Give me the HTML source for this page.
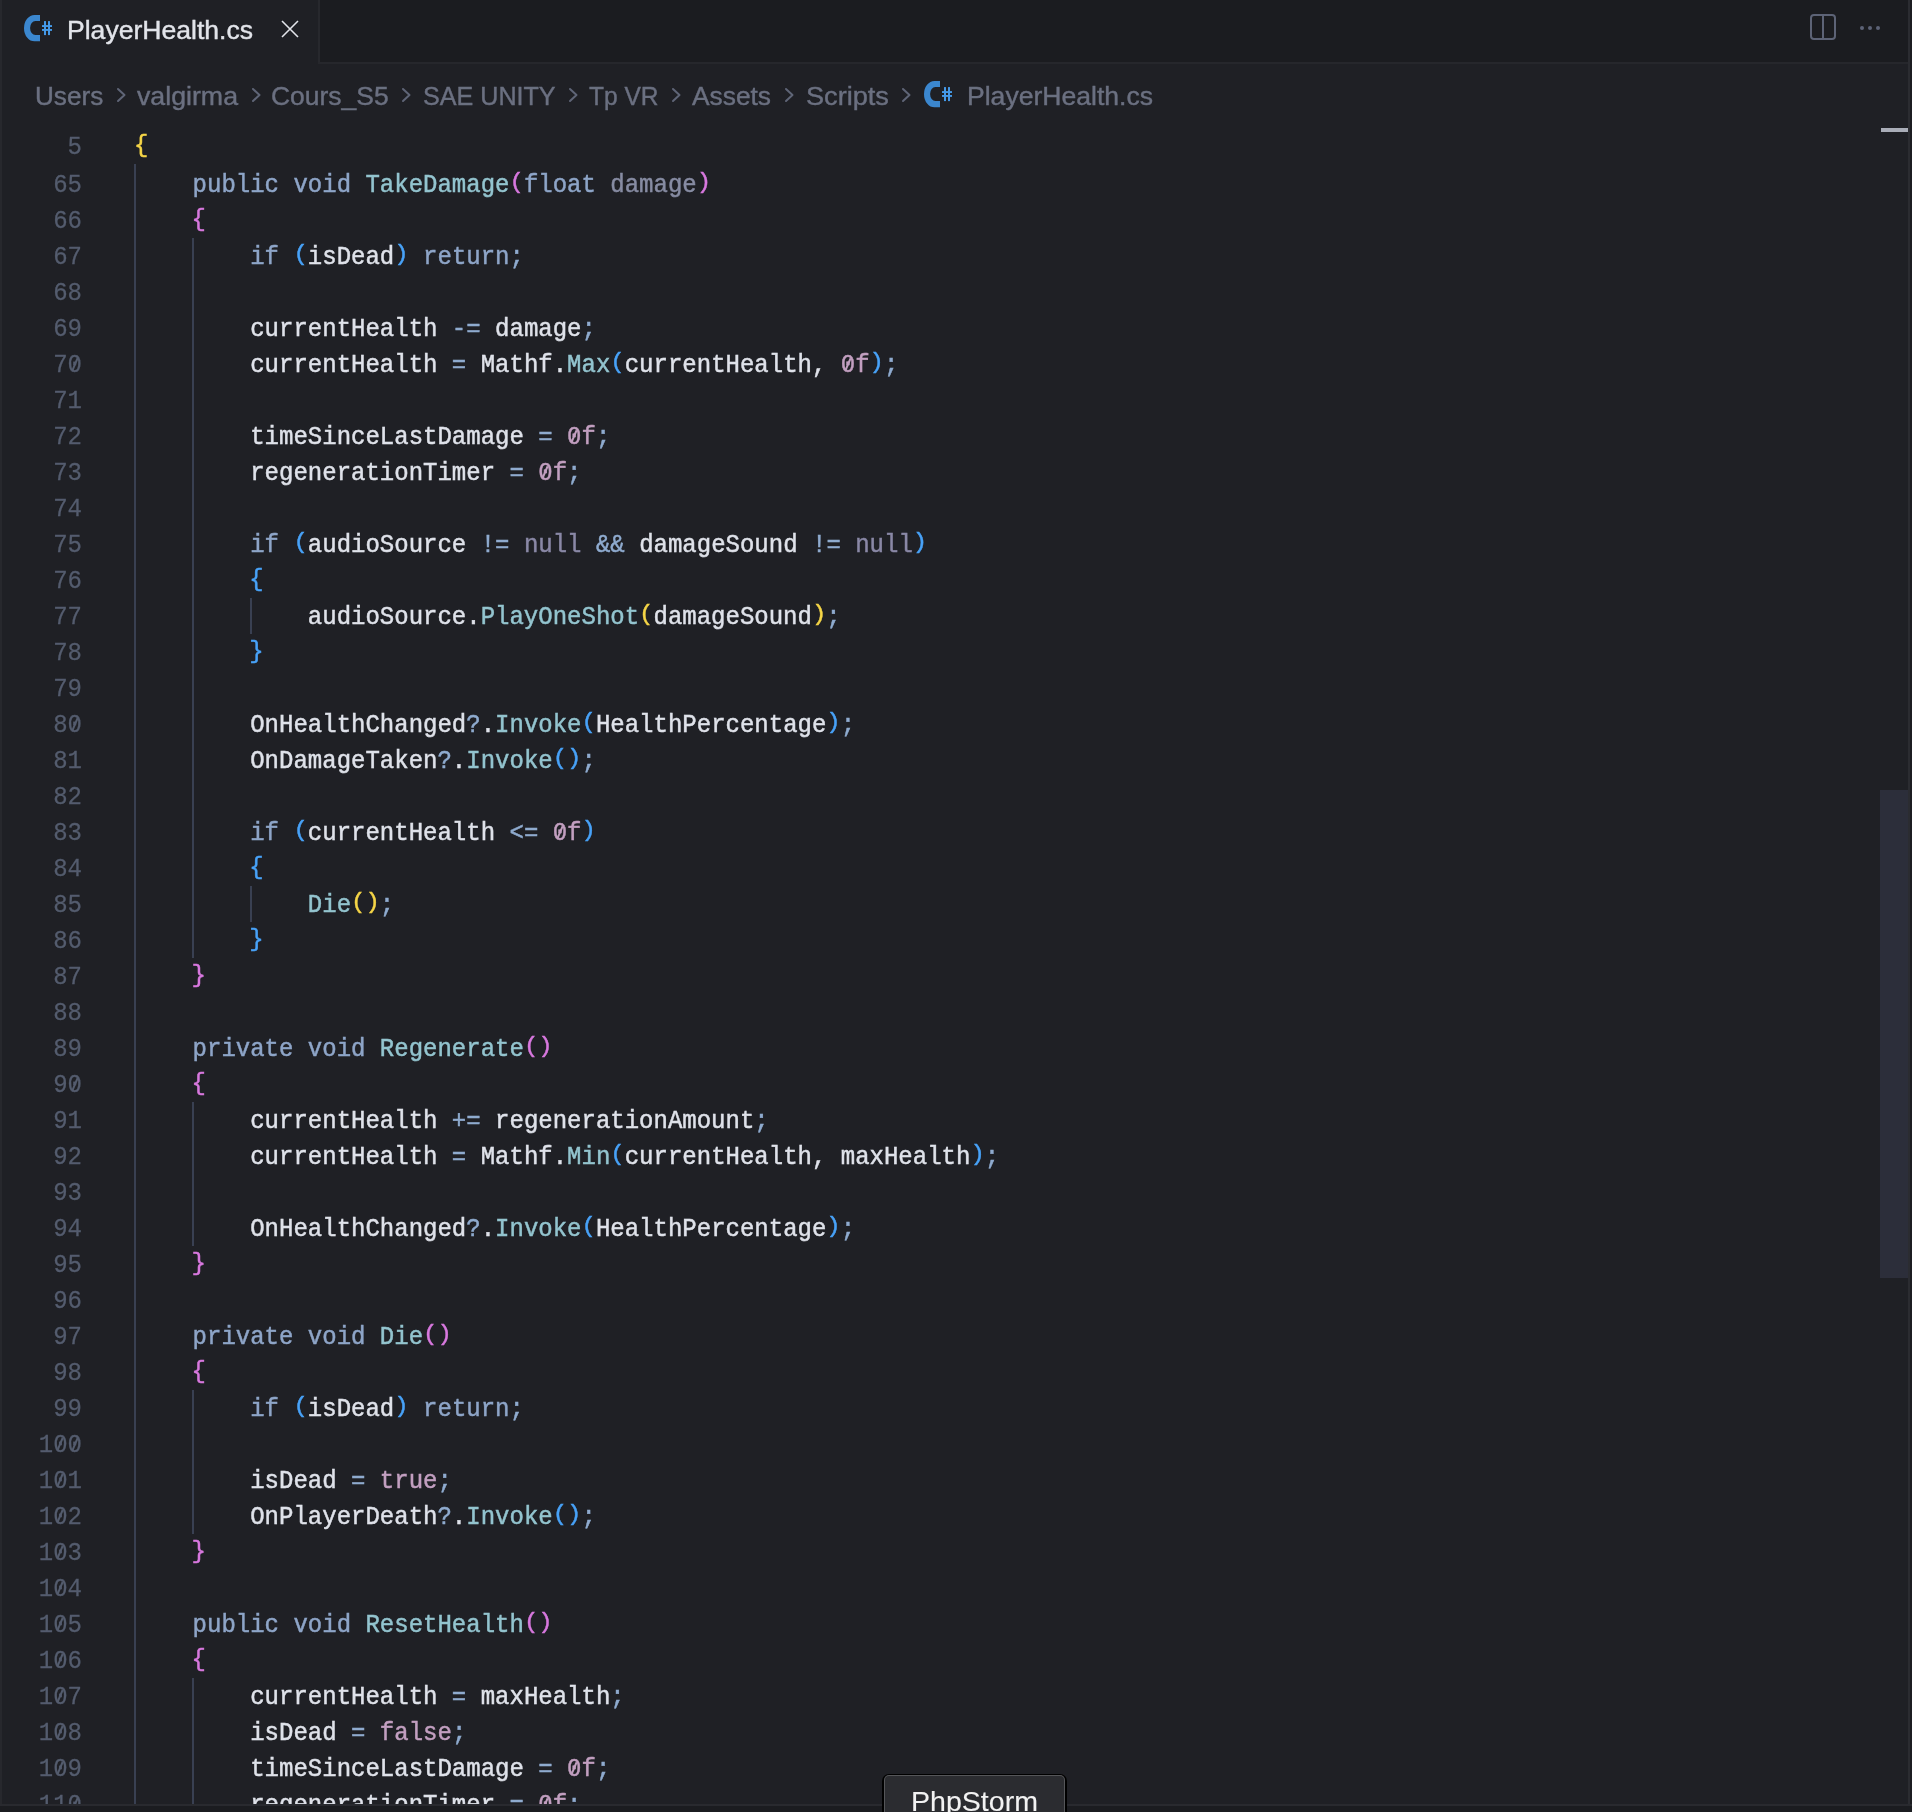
<!DOCTYPE html>
<html><head><meta charset="utf-8"><style>
html,body{margin:0;padding:0;}
body{width:1912px;height:1812px;background:#1f2025;position:relative;overflow:hidden;font-family:"Liberation Sans",sans-serif;-webkit-font-smoothing:antialiased;}
#wrap{position:absolute;left:0;top:0;width:1912px;height:1812px;will-change:transform;}
.abs{position:absolute;}
.ln{position:absolute;left:0;width:82px;text-align:right;font-family:"Liberation Mono",monospace;font-size:24px;line-height:36px;height:36px;color:#545c6e;transform:translateY(1.5px) scaleY(1.07);transform-origin:0 23.5px;white-space:pre;}
.cl{position:absolute;left:135px;font-family:"Liberation Mono",monospace;font-size:24px;line-height:36px;height:36px;color:#dfe2ea;transform:translateY(1.5px) scaleY(1.05);transform-origin:0 23.5px;white-space:pre;}
.cl i,.ln i{font-style:normal;}
.z{position:relative;display:inline-block;}
.z b{position:absolute;left:50%;top:17px;width:1.8px;height:12.5px;background:currentColor;transform:translate(-50%,-50%) rotate(24deg);}
.pb{display:inline-block;transform:translateY(-1.3px) scaleY(0.9);transform-origin:50% 6px;}
.cb{display:inline-block;transform:translate(-1px,-0.4px) scaleY(0.94);transform-origin:50% 6.5px;}
.cl{-webkit-text-stroke:0.45px currentColor;}
.ln{-webkit-text-stroke:0.25px currentColor;}
.k{color:#8ea5c8}.p{color:#878ca3}.f{color:#93c4cf}.i{color:#dfe2ea}.o{color:#8fabcf}.n{color:#c29fc0}.nl{color:#8a88a6}.y{color:#f5d547}.m{color:#d878df}.b{color:#48a2f8}.w{color:#dcdfe6}
.g{position:absolute;width:2px;background:#394052;}
.st{position:absolute;white-space:pre;transform-origin:0 0;line-height:1;-webkit-text-stroke:0.4px currentColor;}
.cs,.chev{position:absolute;}
</style></head><body><div id="wrap">
<div class="abs" style="left:0;top:0;width:2px;height:1804px;background:#27282d"></div>
<div class="abs" style="left:318px;top:0;width:1594px;height:62px;background:#1b1c20"></div>
<div class="abs" style="left:318px;top:0;width:2px;height:63px;background:#27282d"></div>
<div class="abs" style="left:318px;top:62px;width:1594px;height:2px;background:#26272c"></div>
<svg class="cs" style="left:24px;top:15px" width="30" height="28" viewBox="0 0 30 28"><path d="M16,0 H10.5 A10.5,13.15 0 0 0 10.5,26.3 H16 V20.1 H11.4 A5.3,7.05 0 0 1 11.4,6 H16 Z" fill="#3b87cf"/><rect x="20" y="6.1" width="2" height="14" fill="#4499e8"/><rect x="24" y="6.1" width="2" height="14" fill="#4499e8"/><rect x="18" y="10.1" width="10" height="1.9" fill="#4499e8"/><rect x="18" y="14" width="10" height="1.9" fill="#4499e8"/></svg>
<div class="st" style="left:67.3px;top:17px;font-size:26px;color:#e2e4ea;transform:scaleX(1.0217);">PlayerHealth.cs</div>
<svg class="abs" style="left:280px;top:19px" width="20" height="20" viewBox="0 0 20 20"><path d="M2,2 L18,18 M18,2 L2,18" stroke="#e2e4ea" stroke-width="1.6"/></svg>
<svg class="abs" style="left:1809px;top:13px" width="28" height="28" viewBox="0 0 28 28"><rect x="2" y="2" width="24" height="24" rx="3" fill="none" stroke="#5d6376" stroke-width="2"/><rect x="13" y="2" width="2" height="24" fill="#5d6376"/></svg>
<div class="abs" style="left:1860px;top:26px;width:4px;height:4px;border-radius:2px;background:#5d6376"></div>
<div class="abs" style="left:1868px;top:26px;width:4px;height:4px;border-radius:2px;background:#5d6376"></div>
<div class="abs" style="left:1876px;top:26px;width:4px;height:4px;border-radius:2px;background:#5d6376"></div>
<div class="st" style="left:35.1px;top:84px;font-size:25px;color:#6b7081;transform:scaleX(1.0447);">Users</div>
<div class="st" style="left:137.2px;top:84px;font-size:25px;color:#6b7081;transform:scaleX(1.0691);">valgirma</div>
<div class="st" style="left:271px;top:84px;font-size:25px;color:#6b7081;transform:scaleX(1.0578);">Cours_S5</div>
<div class="st" style="left:422.6px;top:84px;font-size:25px;color:#6b7081;transform:scaleX(1.0049);">SAE UNITY</div>
<div class="st" style="left:589.3px;top:84px;font-size:25px;color:#6b7081;transform:scaleX(0.9810);">Tp VR</div>
<div class="st" style="left:692.3px;top:84px;font-size:25px;color:#6b7081;transform:scaleX(1.0529);">Assets</div>
<div class="st" style="left:805.5px;top:84px;font-size:25px;color:#6b7081;transform:scaleX(1.0850);">Scripts</div>
<div class="st" style="left:966.8px;top:84px;font-size:25px;color:#6b7081;transform:scaleX(1.0624);">PlayerHealth.cs</div>
<svg class="chev" style="left:115.6px;top:87px" width="12" height="16" viewBox="0 0 12 16"><path d="M2,2 L8.5,8 L2,14" fill="none" stroke="#5f6577" stroke-width="2" stroke-linecap="round" stroke-linejoin="round"/></svg>
<svg class="chev" style="left:250.8px;top:87px" width="12" height="16" viewBox="0 0 12 16"><path d="M2,2 L8.5,8 L2,14" fill="none" stroke="#5f6577" stroke-width="2" stroke-linecap="round" stroke-linejoin="round"/></svg>
<svg class="chev" style="left:400.8px;top:87px" width="12" height="16" viewBox="0 0 12 16"><path d="M2,2 L8.5,8 L2,14" fill="none" stroke="#5f6577" stroke-width="2" stroke-linecap="round" stroke-linejoin="round"/></svg>
<svg class="chev" style="left:568px;top:87px" width="12" height="16" viewBox="0 0 12 16"><path d="M2,2 L8.5,8 L2,14" fill="none" stroke="#5f6577" stroke-width="2" stroke-linecap="round" stroke-linejoin="round"/></svg>
<svg class="chev" style="left:671.4px;top:87px" width="12" height="16" viewBox="0 0 12 16"><path d="M2,2 L8.5,8 L2,14" fill="none" stroke="#5f6577" stroke-width="2" stroke-linecap="round" stroke-linejoin="round"/></svg>
<svg class="chev" style="left:784px;top:87px" width="12" height="16" viewBox="0 0 12 16"><path d="M2,2 L8.5,8 L2,14" fill="none" stroke="#5f6577" stroke-width="2" stroke-linecap="round" stroke-linejoin="round"/></svg>
<svg class="chev" style="left:900.8px;top:87px" width="12" height="16" viewBox="0 0 12 16"><path d="M2,2 L8.5,8 L2,14" fill="none" stroke="#5f6577" stroke-width="2" stroke-linecap="round" stroke-linejoin="round"/></svg>
<svg class="cs" style="left:924px;top:81px" width="30" height="28" viewBox="0 0 30 28"><path d="M16,0 H10.5 A10.5,13.15 0 0 0 10.5,26.3 H16 V20.1 H11.4 A5.3,7.05 0 0 1 11.4,6 H16 Z" fill="#3b87cf"/><rect x="20" y="6.1" width="2" height="14" fill="#4499e8"/><rect x="24" y="6.1" width="2" height="14" fill="#4499e8"/><rect x="18" y="10.1" width="10" height="1.9" fill="#4499e8"/><rect x="18" y="14" width="10" height="1.9" fill="#4499e8"/></svg>
<div class="ln" style="top:166px">65</div>
<div class="cl" style="top:166px">    <i class="k">public</i> <i class="k">void</i> <i class="f">TakeDamage</i><i class="m pb">(</i><i class="k">float</i> <i class="p">damage</i><i class="m pb">)</i></div>
<div class="ln" style="top:202px">66</div>
<div class="cl" style="top:202px">    <i class="m cb">{</i></div>
<div class="ln" style="top:238px">67</div>
<div class="cl" style="top:238px">        <i class="k">if</i> <i class="b pb">(</i><i class="i">isDead</i><i class="b pb">)</i> <i class="k">return</i><i class="o">;</i></div>
<div class="ln" style="top:274px">68</div>
<div class="ln" style="top:310px">69</div>
<div class="cl" style="top:310px">        <i class="i">currentHealth</i> <i class="o">-=</i> <i class="i">damage</i><i class="o">;</i></div>
<div class="ln" style="top:346px">7<i class="z">0<b></b></i></div>
<div class="cl" style="top:346px">        <i class="i">currentHealth</i> <i class="o">=</i> <i class="i">Mathf.</i><i class="f">Max</i><i class="b pb">(</i><i class="i">currentHealth, </i><i class="n"><i class="z">0<b></b></i>f</i><i class="b pb">)</i><i class="o">;</i></div>
<div class="ln" style="top:382px">71</div>
<div class="ln" style="top:418px">72</div>
<div class="cl" style="top:418px">        <i class="i">timeSinceLastDamage</i> <i class="o">=</i> <i class="n"><i class="z">0<b></b></i>f</i><i class="o">;</i></div>
<div class="ln" style="top:454px">73</div>
<div class="cl" style="top:454px">        <i class="i">regenerationTimer</i> <i class="o">=</i> <i class="n"><i class="z">0<b></b></i>f</i><i class="o">;</i></div>
<div class="ln" style="top:490px">74</div>
<div class="ln" style="top:526px">75</div>
<div class="cl" style="top:526px">        <i class="k">if</i> <i class="b pb">(</i><i class="i">audioSource</i> <i class="o">!=</i> <i class="nl">null</i> <i class="o">&amp;&amp;</i> <i class="i">damageSound</i> <i class="o">!=</i> <i class="nl">null</i><i class="b pb">)</i></div>
<div class="ln" style="top:562px">76</div>
<div class="cl" style="top:562px">        <i class="b cb">{</i></div>
<div class="ln" style="top:598px">77</div>
<div class="cl" style="top:598px">            <i class="i">audioSource.</i><i class="f">PlayOneShot</i><i class="y pb">(</i><i class="i">damageSound</i><i class="y pb">)</i><i class="o">;</i></div>
<div class="ln" style="top:634px">78</div>
<div class="cl" style="top:634px">        <i class="b cb">}</i></div>
<div class="ln" style="top:670px">79</div>
<div class="ln" style="top:706px">8<i class="z">0<b></b></i></div>
<div class="cl" style="top:706px">        <i class="i">OnHealthChanged</i><i class="o">?</i><i class="i">.</i><i class="f">Invoke</i><i class="b pb">(</i><i class="i">HealthPercentage</i><i class="b pb">)</i><i class="o">;</i></div>
<div class="ln" style="top:742px">81</div>
<div class="cl" style="top:742px">        <i class="i">OnDamageTaken</i><i class="o">?</i><i class="i">.</i><i class="f">Invoke</i><i class="b pb">(</i><i class="b pb">)</i><i class="o">;</i></div>
<div class="ln" style="top:778px">82</div>
<div class="ln" style="top:814px">83</div>
<div class="cl" style="top:814px">        <i class="k">if</i> <i class="b pb">(</i><i class="i">currentHealth</i> <i class="o">&lt;=</i> <i class="n"><i class="z">0<b></b></i>f</i><i class="b pb">)</i></div>
<div class="ln" style="top:850px">84</div>
<div class="cl" style="top:850px">        <i class="b cb">{</i></div>
<div class="ln" style="top:886px">85</div>
<div class="cl" style="top:886px">            <i class="f">Die</i><i class="y pb">(</i><i class="y pb">)</i><i class="o">;</i></div>
<div class="ln" style="top:922px">86</div>
<div class="cl" style="top:922px">        <i class="b cb">}</i></div>
<div class="ln" style="top:958px">87</div>
<div class="cl" style="top:958px">    <i class="m cb">}</i></div>
<div class="ln" style="top:994px">88</div>
<div class="ln" style="top:1030px">89</div>
<div class="cl" style="top:1030px">    <i class="k">private</i> <i class="k">void</i> <i class="f">Regenerate</i><i class="m pb">(</i><i class="m pb">)</i></div>
<div class="ln" style="top:1066px">9<i class="z">0<b></b></i></div>
<div class="cl" style="top:1066px">    <i class="m cb">{</i></div>
<div class="ln" style="top:1102px">91</div>
<div class="cl" style="top:1102px">        <i class="i">currentHealth</i> <i class="o">+=</i> <i class="i">regenerationAmount</i><i class="o">;</i></div>
<div class="ln" style="top:1138px">92</div>
<div class="cl" style="top:1138px">        <i class="i">currentHealth</i> <i class="o">=</i> <i class="i">Mathf.</i><i class="f">Min</i><i class="b pb">(</i><i class="i">currentHealth, maxHealth</i><i class="b pb">)</i><i class="o">;</i></div>
<div class="ln" style="top:1174px">93</div>
<div class="ln" style="top:1210px">94</div>
<div class="cl" style="top:1210px">        <i class="i">OnHealthChanged</i><i class="o">?</i><i class="i">.</i><i class="f">Invoke</i><i class="b pb">(</i><i class="i">HealthPercentage</i><i class="b pb">)</i><i class="o">;</i></div>
<div class="ln" style="top:1246px">95</div>
<div class="cl" style="top:1246px">    <i class="m cb">}</i></div>
<div class="ln" style="top:1282px">96</div>
<div class="ln" style="top:1318px">97</div>
<div class="cl" style="top:1318px">    <i class="k">private</i> <i class="k">void</i> <i class="f">Die</i><i class="m pb">(</i><i class="m pb">)</i></div>
<div class="ln" style="top:1354px">98</div>
<div class="cl" style="top:1354px">    <i class="m cb">{</i></div>
<div class="ln" style="top:1390px">99</div>
<div class="cl" style="top:1390px">        <i class="k">if</i> <i class="b pb">(</i><i class="i">isDead</i><i class="b pb">)</i> <i class="k">return</i><i class="o">;</i></div>
<div class="ln" style="top:1426px">1<i class="z">0<b></b></i><i class="z">0<b></b></i></div>
<div class="ln" style="top:1462px">1<i class="z">0<b></b></i>1</div>
<div class="cl" style="top:1462px">        <i class="i">isDead</i> <i class="o">=</i> <i class="n">true</i><i class="o">;</i></div>
<div class="ln" style="top:1498px">1<i class="z">0<b></b></i>2</div>
<div class="cl" style="top:1498px">        <i class="i">OnPlayerDeath</i><i class="o">?</i><i class="i">.</i><i class="f">Invoke</i><i class="b pb">(</i><i class="b pb">)</i><i class="o">;</i></div>
<div class="ln" style="top:1534px">1<i class="z">0<b></b></i>3</div>
<div class="cl" style="top:1534px">    <i class="m cb">}</i></div>
<div class="ln" style="top:1570px">1<i class="z">0<b></b></i>4</div>
<div class="ln" style="top:1606px">1<i class="z">0<b></b></i>5</div>
<div class="cl" style="top:1606px">    <i class="k">public</i> <i class="k">void</i> <i class="f">ResetHealth</i><i class="m pb">(</i><i class="m pb">)</i></div>
<div class="ln" style="top:1642px">1<i class="z">0<b></b></i>6</div>
<div class="cl" style="top:1642px">    <i class="m cb">{</i></div>
<div class="ln" style="top:1678px">1<i class="z">0<b></b></i>7</div>
<div class="cl" style="top:1678px">        <i class="i">currentHealth</i> <i class="o">=</i> <i class="i">maxHealth</i><i class="o">;</i></div>
<div class="ln" style="top:1714px">1<i class="z">0<b></b></i>8</div>
<div class="cl" style="top:1714px">        <i class="i">isDead</i> <i class="o">=</i> <i class="n">false</i><i class="o">;</i></div>
<div class="ln" style="top:1750px">1<i class="z">0<b></b></i>9</div>
<div class="cl" style="top:1750px">        <i class="i">timeSinceLastDamage</i> <i class="o">=</i> <i class="n"><i class="z">0<b></b></i>f</i><i class="o">;</i></div>
<div class="ln" style="top:1786px">11<i class="z">0<b></b></i></div>
<div class="cl" style="top:1786px">        <i class="i">regenerationTimer</i> <i class="o">=</i> <i class="n"><i class="z">0<b></b></i>f</i><i class="o">;</i></div>
<div class="ln" style="top:128px">5</div>
<div class="cl" style="top:128px"><i class="y cb">{</i></div>
<div class="g" style="left:134.0px;top:164px;height:1640px"></div>
<div class="g" style="left:192.0px;top:238px;height:720px"></div>
<div class="g" style="left:250.0px;top:598px;height:36px"></div>
<div class="g" style="left:250.0px;top:886px;height:36px"></div>
<div class="g" style="left:192.0px;top:1102px;height:144px"></div>
<div class="g" style="left:192.0px;top:1390px;height:144px"></div>
<div class="g" style="left:192.0px;top:1678px;height:126px"></div>
<div class="abs" style="left:1880px;top:790px;width:28px;height:488px;background:#2c2e3a"></div>
<div class="abs" style="left:1881px;top:128px;width:27px;height:4px;background:#a9adb8"></div>
<div class="abs" style="left:1908px;top:0;width:2px;height:1804px;background:#2b2c31"></div>
<div class="abs" style="left:1910px;top:0;width:2px;height:1812px;background:#1c1d21"></div>
<div class="abs" style="left:0;top:1804px;width:1912px;height:2px;background:#292a2f"></div>
<div class="abs" style="left:0;top:1806px;width:1912px;height:6px;background:#1b1c20"></div>
<div class="abs" style="left:882px;top:1774px;width:185px;height:60px;border-radius:7px;background:#000"></div>
<div class="abs" style="left:884px;top:1775px;width:181px;height:58px;border-radius:5px;background:#555659"></div>
<div class="abs" style="left:885px;top:1776px;width:179px;height:56px;border-radius:4px;background:#2b2c30"></div>
<div class="st" style="left:911px;top:1788px;font-size:28px;color:#f2f2f2;transform:scaleX(1.0200);-webkit-text-stroke:0.1px #f2f2f2">PhpStorm</div>
</div></body></html>
